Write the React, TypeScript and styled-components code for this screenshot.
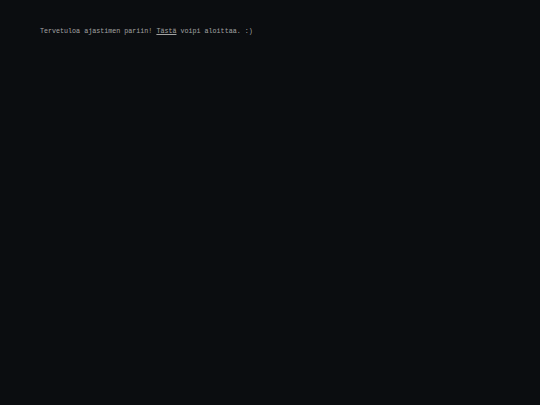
import React from 'react';
import styled, { createGlobalStyle } from 'styled-components';

const GlobalStyle = createGlobalStyle`
  html, body {
    margin: 0;
    padding: 0;
    background: #0b0d10;
  }
  #root {
    min-height: 100vh;
  }
`;

const Page = styled.main`
  min-height: 100vh;
  background: #0b0d10;
  padding: 27px 40px;
  box-sizing: border-box;
`;

const Welcome = styled.p`
  margin: 0;
  font-family: "Liberation Mono", "Courier New", monospace;
  font-size: 6.7px;
  line-height: 9px;
  color: #a2a2a2;
`;

const StartLink = styled.a`
  color: #a2a2a2;
  text-decoration: underline;
  cursor: pointer;
`;

const App: React.FC = () => {
  return (
    <>
      <GlobalStyle />
      <Page>
        <Welcome>
          Tervetuloa ajastimen pariin! <StartLink>Tästä</StartLink> voipi aloittaa. :)
        </Welcome>
      </Page>
    </>
  );
};

export default App;
